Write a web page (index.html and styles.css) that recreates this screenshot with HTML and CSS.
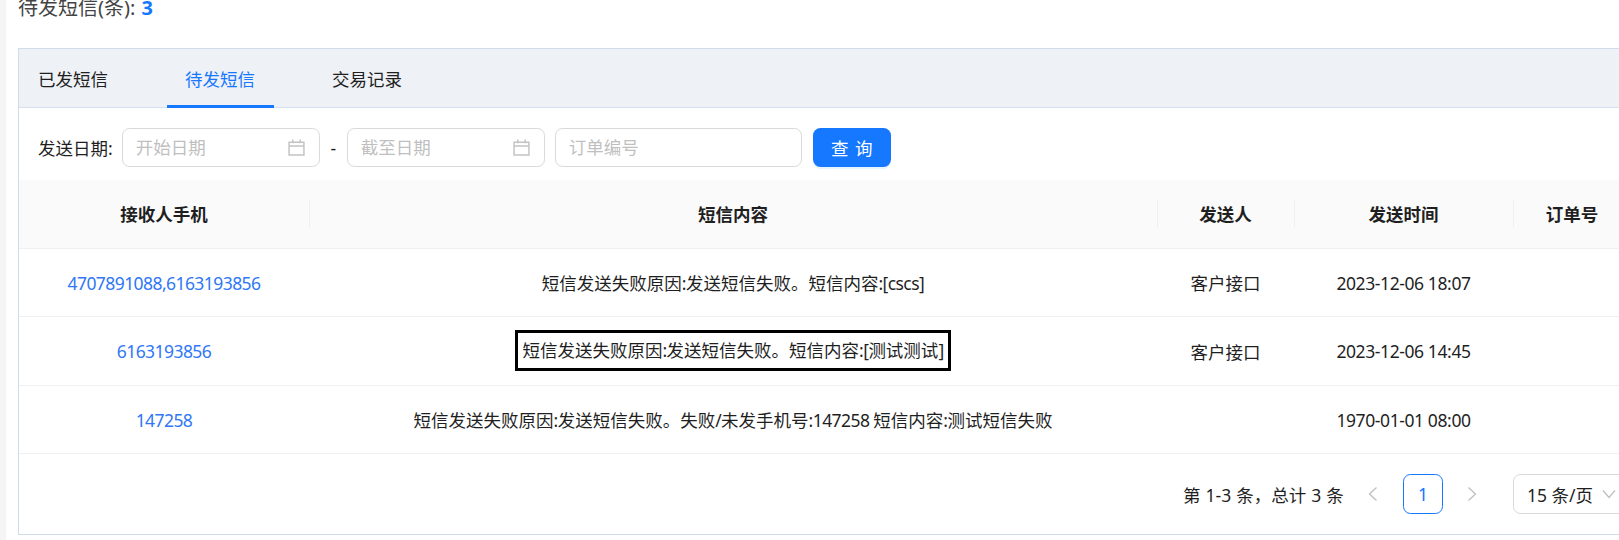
FILE: index.html
```html
<!DOCTYPE html>
<html lang="zh-CN">
<head>
<meta charset="utf-8">
<title>短信记录</title>
<link rel="stylesheet" href="styles.css">
</head>
<body>
<div class="rail"></div>
<main class="main">
  <div class="summary">待发短信(条): <strong class="count">3</strong></div>
  <section class="card">
    <nav class="tabs">
      <a class="tab">已发短信</a>
      <a class="tab active">待发短信</a>
      <a class="tab">交易记录</a>
    </nav>
    <div class="filters">
      <label class="filter-label">发送日期:</label>
      <div class="input date"><span class="ph">开始日期</span>
        <svg class="cal" viewBox="0 0 16 16"><path d="M1 3h14v12H1zM1 6.5h14M4.5 .5v3.5M11.5 .5v3.5" fill="none" stroke="#c4c4c4" stroke-width="1.4"/></svg>
      </div>
      <span class="dash">-</span>
      <div class="input date"><span class="ph">截至日期</span>
        <svg class="cal" viewBox="0 0 16 16"><path d="M1 3h14v12H1zM1 6.5h14M4.5 .5v3.5M11.5 .5v3.5" fill="none" stroke="#c4c4c4" stroke-width="1.4"/></svg>
      </div>
      <div class="input order"><span class="ph">订单编号</span></div>
      <button class="btn">查 询</button>
    </div>
    <table class="table">
      <colgroup>
        <col class="c1"><col class="c2"><col class="c3"><col class="c4"><col class="c5">
      </colgroup>
      <thead>
        <tr><th>接收人手机</th><th>短信内容</th><th>发送人</th><th>发送时间</th><th>订单号</th></tr>
      </thead>
      <tbody>
        <tr>
          <td><a class="link num">4707891088,6163193856</a></td>
          <td>短信发送失败原因<span class="num">:</span>发送短信失败。短信内容<span class="num">:[cscs]</span></td>
          <td>客户接口</td><td class="when">2023-12-06 18:07</td><td></td>
        </tr>
        <tr>
          <td><a class="link num">6163193856</a></td>
          <td><span class="boxed">短信发送失败原因<span class="num">:</span>发送短信失败。短信内容<span class="num">:[</span>测试测试<span class="num">]</span></span></td>
          <td>客户接口</td><td class="when">2023-12-06 14:45</td><td></td>
        </tr>
        <tr>
          <td><a class="link num">147258</a></td>
          <td>短信发送失败原因<span class="num">:</span>发送短信失败。失败<span class="num">/</span>未发手机号<span class="num">:147258 </span>短信内容<span class="num">:</span>测试短信失败</td>
          <td></td><td class="when">1970-01-01 08:00</td><td></td>
        </tr>
      </tbody>
    </table>
    <div class="pager">
      <span class="total">第 1-3 条，总计 3 条</span>
      <svg class="chev prev" viewBox="0 0 10 16"><path d="M8.5 1.5 1.5 8l7 6.5" fill="none" stroke="#bfbfbf" stroke-width="1.3"/></svg>
      <span class="page">1</span>
      <svg class="chev next" viewBox="0 0 10 16"><path d="M1.5 1.5 8.5 8l-7 6.5" fill="none" stroke="#bfbfbf" stroke-width="1.3"/></svg>
      <div class="size"><span>15 条/页</span>
        <svg class="down" viewBox="0 0 14 10"><path d="M1 1.5 7 8.5l6-7" fill="none" stroke="#bfbfbf" stroke-width="1.3"/></svg>
      </div>
    </div>
  </section>
</main>
</body>
</html>
```
FILE: styles.css
```css
* { box-sizing: border-box; }
html, body { margin: 0; height: 100%; overflow: hidden; background: #fff; }
body {
  display: flex;
  font-family: "Noto Sans", "Noto Sans CJK SC", sans-serif;
  font-size: 17.5px;
  color: #1f1f1f;
}
.rail { flex: 0 0 6px; background: #f5f5f5; }
.main { flex: 0 0 1613px; padding-left: 12px; overflow: hidden; }
.summary { height: 15px; line-height: 15px; margin-bottom: 33px; font-size: 20px; color: #444; white-space: nowrap; }
.count { color: #1677ff; font-weight: 700; margin-left: 1px; }
.num { letter-spacing: -.57px; }
.when { letter-spacing: -.4px; }

.card { width: 1640px; height: 487px; border: 1.25px solid #cfdcec; }
.tabs {
  display: flex; height: 59px; background: #eef1f6;
  border-bottom: 1.25px solid #d5dfee;
  padding-left: 19px;
}
.tab { display: flex; align-items: center; height: 100%; margin-right: 77px; position: relative; }
.tab.active { color: #1677ff; }
.tab.active::after {
  content: ""; position: absolute; left: -18px; right: -19px; bottom: -1px;
  height: 3px; background: #1677ff;
}
.filters { display: flex; align-items: center; height: 72px; padding: 7px 0 0 19px; }
.filter-label { margin-right: 9px; }
.input {
  display: flex; align-items: center; justify-content: space-between;
  height: 39px; padding: 0 14px 3px 13px; border: 1.25px solid #d9d9d9; border-radius: 7.5px;
}
.date { width: 198px; }
.order { width: 247px; margin-left: 10px; }
.ph { color: #bfbfbf; }
.cal { width: 17px; height: 17px; margin-top: 3px; }
.dash { width: 27px; text-align: center; }
.btn {
  width: 78px; height: 39px; margin-left: 11px; word-spacing: 2px;
  border: 0; border-radius: 7.5px; background: #1677ff; color: #fff;
  font: inherit; box-shadow: 0 2px 0 rgba(5,145,255,.1);
}
.table { width: 1612px; border-collapse: collapse; table-layout: fixed; }
.c1 { width: 290px; } .c2 { width: 848px; } .c3 { width: 137px; } .c4 { width: 219px; } .c5 { width: 118px; }
th {
  height: 68px; padding: 0; background: #fafafa; font-weight: 700; text-align: center;
  border-bottom: 1.25px solid #f0f0f0; position: relative;
}
th + th::before {
  content: ""; position: absolute; left: 0; top: 20px; width: 1.25px; height: 28px; background: #f0f0f0;
}
td { height: 68.5px; padding: 1px 0 0; text-align: center; border-bottom: 1.25px solid #f0f0f0; }
.link { color: #2f77f6; }
.boxed { display: inline-block; margin-bottom: 1px; padding: 5px 4.5px; line-height: 25px; border: 3px solid #000; }
.pager { display: flex; align-items: center; height: 80px; padding-left: 1164px; }
.total { width: 185px; white-space: nowrap; word-spacing: .5px; }
.chev { width: 10px; height: 16px; }
.page {
  display: flex; align-items: center; justify-content: center;
  width: 40px; height: 40px; margin: 0 24px 0 25px;
  border: 1.25px solid #1677ff; border-radius: 7.5px; color: #1677ff;
}
.size {
  display: flex; align-items: center; gap: 9px; width: 130px; height: 40px; margin-left: 36px;
  padding-left: 13px; border: 1.25px solid #d9d9d9; border-radius: 7.5px;
}
.down { width: 14px; height: 10px; }
```
